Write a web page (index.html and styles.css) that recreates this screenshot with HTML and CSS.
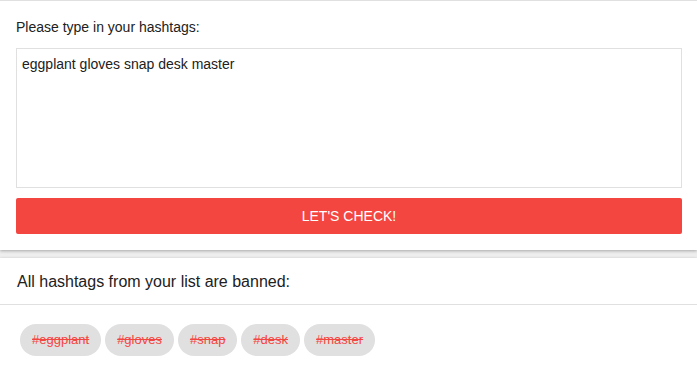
FILE: index.html
```html
<!DOCTYPE html>
<html>
<head>
<meta charset="utf-8" />
<title>Hashtag check</title>
<link rel="stylesheet" href="styles.css">
</head>
<body>

<div class="card" id="check">
	<label for="tags" class="prompt">Please type in your hashtags:</label>
	<textarea id="tags" class="tags">eggplant gloves snap desk master</textarea>
	<button type="button" class="check-btn">LET'S CHECK!</button>
</div>

<div class="card" id="result">
	<div class="result-head">All hashtags from your list are banned:</div>
	<div class="chips">
		<span class="chip">#eggplant</span>
		<span class="chip">#gloves</span>
		<span class="chip">#snap</span>
		<span class="chip">#desk</span>
		<span class="chip">#master</span>
	</div>
</div>

</body>
</html>
```

FILE: styles.css
```css
html, body {
	margin: 0;
	padding: 0;
	background: #eeeeee;
	font-family: "Liberation Sans", Arial, sans-serif;
	color: #212121;
}

.card {
	background: white;
	box-shadow: 0 1px 3px rgba(0, 0, 0, 0.3);
}

#check {
	border-top: 1px solid #e0e0e0;
	padding: 15px 15px 16px 16px;
	display: flex;
	flex-direction: column;
}

.prompt {
	font-size: 14px;
	line-height: 22px;
	margin-bottom: 10px;
}

.tags {
	box-sizing: border-box;
	height: 140px;
	margin: 0;
	padding: 6px 5px;
	border: 1px solid #e0e0e0;
	font-family: inherit;
	font-size: 14px;
	line-height: 18px;
	color: #212121;
	resize: none;
	outline: none;
}

.check-btn {
	margin-top: 10px;
	height: 36px;
	border: none;
	border-radius: 2px;
	background: #f44641;
	color: white;
	font-family: inherit;
	font-size: 14px;
	cursor: pointer;
}

#result {
	margin-top: 8px;
	min-height: 114px;
}

.result-head {
	font-size: 16px;
	line-height: 20px;
	padding: 14px 16px 12px 17px;
	border-bottom: 1px solid #e0e0e0;
}

.chips {
	display: flex;
	flex-wrap: wrap;
	gap: 4px;
	padding: 19px 20px;
}

.chip {
	height: 32px;
	line-height: 32px;
	padding: 0 12px;
	border-radius: 16px;
	background: #e0e0e0;
	color: #f44641;
	font-size: 13px;
	text-decoration: line-through;
}
```
